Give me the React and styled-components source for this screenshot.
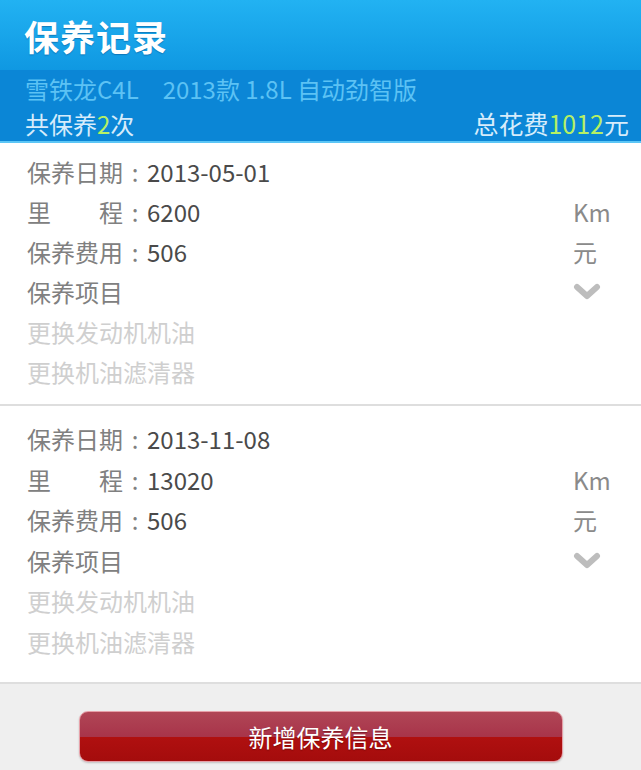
import React from 'react';
import styled, { createGlobalStyle } from 'styled-components';

const GlobalStyle = createGlobalStyle`
  html, body {
    margin: 0;
    padding: 0;
    background: #efefef;
    font-family: "Noto Sans CJK SC", "Noto Sans", sans-serif;
  }
`;

const records = [
  {
    date: '2013-05-01',
    mileage: '6200',
    cost: '506',
    items: ['更换发动机机油', '更换机油滤清器'],
    pad: [9, 12],
    gap: 40,
  },
  {
    date: '2013-11-08',
    mileage: '13020',
    cost: '506',
    items: ['更换发动机机油', '更换机油滤清器'],
    pad: [13, 20],
    gap: 40.5,
  },
];

export default function App() {
  return (
    <Page>
      <GlobalStyle />
      <TitleBar>保养记录</TitleBar>
      <CarBar>
        <CarName>雪铁龙C4L　2013款 1.8L 自动劲智版</CarName>
        <SummaryRow>
          <span>
            共保养<Hi>2</Hi>次
          </span>
          <Total>
            总花费<Hi>1012</Hi>元
          </Total>
        </SummaryRow>
      </CarBar>
      {records.map((r) => (
        <Card key={r.date} $top={r.pad[0]} $bottom={r.pad[1]} $row={r.gap}>
          <Row>
            <Label>保养日期</Label>
            <Colon>:</Colon>
            <Value>{r.date}</Value>
          </Row>
          <Row>
            <Label>
              <span>里</span>
              <span>程</span>
            </Label>
            <Colon>:</Colon>
            <Value>{r.mileage}</Value>
            <Unit>Km</Unit>
          </Row>
          <Row>
            <Label>保养费用</Label>
            <Colon>:</Colon>
            <Value>{r.cost}</Value>
            <Unit>元</Unit>
          </Row>
          <Row>
            <Label>保养项目</Label>
            <Unit>
              <svg width="28" height="18" viewBox="0 0 28 18">
                <path d="M4 4 L14 13 L24 4" fill="none" stroke="#bdbdbd" strokeWidth="6" strokeLinejoin="round" strokeLinecap="round" />
              </svg>
            </Unit>
          </Row>
          {r.items.map((it) => (
            <Item key={it}>{it}</Item>
          ))}
        </Card>
      ))}
      <Footer>
        <AddButton>新增保养信息</AddButton>
      </Footer>
    </Page>
  );
}

const Page = styled.div`
  width: 641px;
  min-height: 770px;
  background: #efefef;
  display: flex;
  flex-direction: column;
`;

const TitleBar = styled.div`
  height: 70px;
  padding: 0 24px;
  display: flex;
  align-items: center;
  background: linear-gradient(#22b2f2, #0f98e2);
  color: #fff;
  font-size: 35px;
  font-weight: bold;
  letter-spacing: 1px;
  text-shadow: 0 1px 1px rgba(0, 60, 120, 0.4);
`;

const CarBar = styled.div`
  height: 73px;
  padding: 1px 12px 0 25px;
  box-sizing: border-box;
  background: #0b86d6;
  border-bottom: 2px solid #5cc6f6;
  display: flex;
  flex-direction: column;
  font-size: 24px;
  line-height: 35px;
`;

const CarName = styled.div`
  color: #5cc2f4;
`;

const SummaryRow = styled.div`
  display: flex;
  justify-content: space-between;
  color: #d6ecfb;
`;

const Total = styled.span`
  font-size: 25px;
`;

const Hi = styled.span`
  color: #b6f064;
`;

const Card = styled.div`
  background: #fff;
  padding: ${({ $top }) => $top}px 31px ${({ $bottom }) => $bottom}px 27px;
  border-bottom: 2px solid #dedede;

  & > div {
    height: ${({ $row }) => $row}px;
    line-height: ${({ $row }) => $row}px;
  }
`;

const Row = styled.div`
  display: flex;
  align-items: center;
  font-size: 24px;
`;

const Label = styled.span`
  width: 96px;
  display: flex;
  justify-content: space-between;
  color: #808080;
`;

const Colon = styled.span`
  width: 24px;
  text-align: center;
  color: #808080;
`;

const Value = styled.span`
  color: #4a4a4a;
  flex: 1;
`;

const Unit = styled.span`
  width: 37px;
  margin-left: auto;
  color: #8a8a8a;
  display: flex;
  align-items: center;
`;

const Item = styled.div`
  font-size: 24px;
  color: #cfcfcf;
`;

const Footer = styled.div`
  flex: 1;
  display: flex;
  justify-content: center;
  padding-top: 27px;
  background: #efefef;
`;

const AddButton = styled.button`
  width: 484px;
  height: 51px;
  border: 1px solid #e6a0a8;
  border-radius: 9px;
  background: linear-gradient(#b04656 0%, #a8344a 50%, #b01010 50%, #a40c0c 100%);
  color: #fff;
  font-family: inherit;
  font-size: 24px;
  text-shadow: 0 1px 1px rgba(80, 0, 0, 0.5);
  box-shadow: 0 1px 2px rgba(0, 0, 0, 0.2);
`;
